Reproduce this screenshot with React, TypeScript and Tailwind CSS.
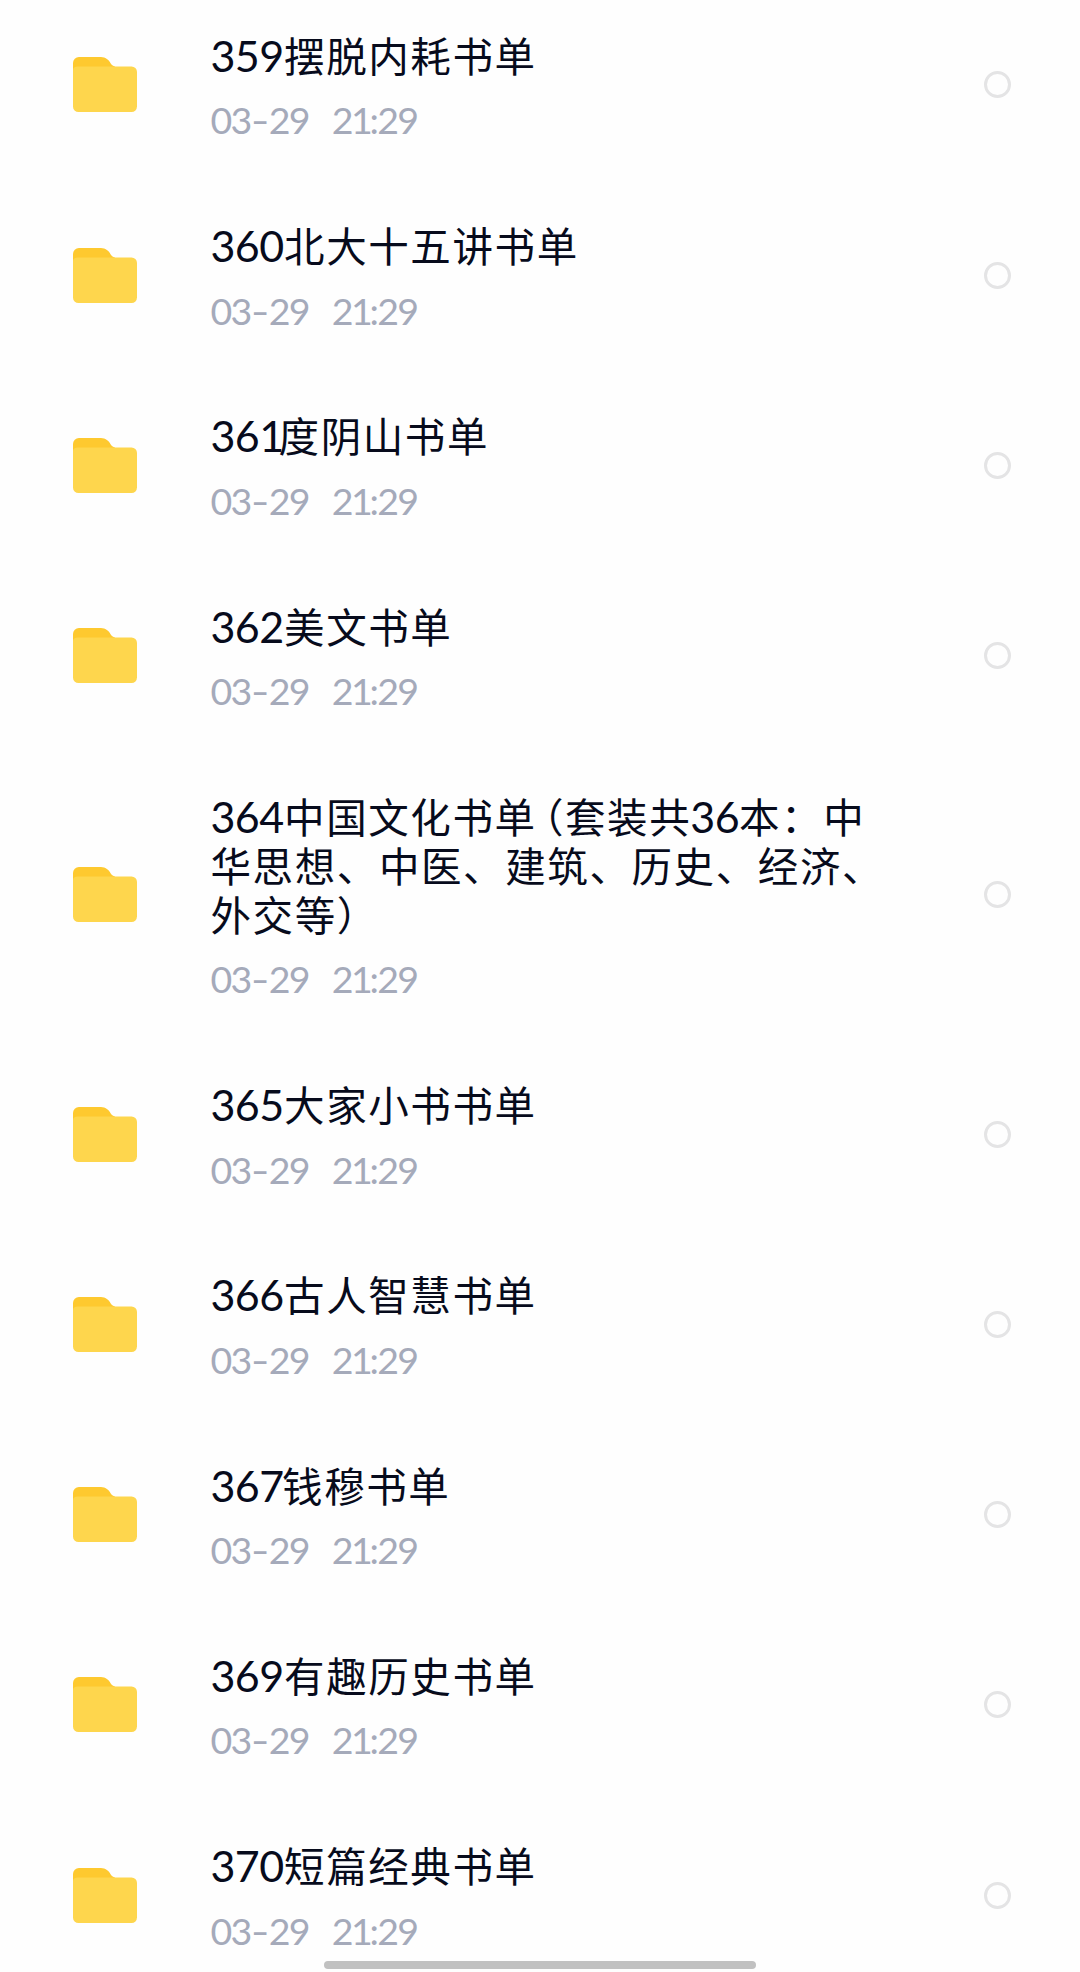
type Folder = {
  no: string;
  lines: string[];
};

const folders: Folder[] = [
  { no: "359", lines: ["359摆脱内耗书单"] },
  { no: "360", lines: ["360北大十五讲书单"] },
  { no: "361", lines: ["361度阴山书单"] },
  { no: "362", lines: ["362美文书单"] },
  {
    no: "364",
    lines: ["364中国文化书单（套装共36本：中", "华思想、中医、建筑、历史、经济、", "外交等）"],
  },
  { no: "365", lines: ["365大家小书书单"] },
  { no: "366", lines: ["366古人智慧书单"] },
  { no: "367", lines: ["367钱穆书单"] },
  { no: "369", lines: ["369有趣历史书单"] },
  { no: "370", lines: ["370短篇经典书单"] },
];

function FolderIcon() {
  return (
    <svg width="64" height="55" viewBox="0 0 64 55" className="shrink-0">
      <path d="M0 6a6 6 0 0 1 6-6h20c5.500 0 8 1.200 10.500 4.500C38 7 39 9 42 9.500L40 13H0z" fill="#fec92f" />
      <path d="M0 13q0-3.500 5-3.500h53.500a5.500 5.500 0 0 1 5.500 5.500v34.500a5.500 5.500 0 0 1-5.500 5.500h-53a5.500 5.500 0 0 1-5.500-5.500z" fill="#fed64d" />
    </svg>
  );
}

// digits are set in a rounder face than the hanzi around them
function TitleLine({ text }: { text: string }) {
  return (
    <span className="block h-[49px] whitespace-nowrap">
      {text.split(/(\d+|（)/).map((part, i) => {
        if (/^\d/.test(part)) {
          return (
            <span
              key={i}
              className={`font-[Lato] text-[43px] tracking-[-0.600px] ${part.endsWith("1") ? "-mr-[5px]" : part.endsWith("7") ? "-mr-[1.500px]" : part === "36" ? "-ml-[1px]" : "mr-[0.500px]"}`}
            >
              {part}
            </span>
          );
        }
        if (part === "（") {
          return (
            <span key={i} className="ml-[6.500px] [font-feature-settings:'halt']">
              {part}
            </span>
          );
        }
        return <span key={i}>{part}</span>;
      })}
    </span>
  );
}

function FolderRow({ folder }: { folder: Folder }) {
  return (
    <li className="flex items-center pt-[43.125px] pb-[43.125px] pl-[73px] pr-[69px]">
      <FolderIcon />
      <div className="relative -top-[3px] ml-[73.500px] flex-1">
        <h2 className="font-['Noto_Sans_CJK_SC',sans-serif] text-[40.500px] leading-[49px] tracking-[1.600px] text-[#070b1c]">
          {folder.lines.map((line) => (
            <TitleLine key={line} text={line} />
          ))}
        </h2>
        <p className="mt-[26.500px] -mb-[1.500px] flex h-[30px] gap-[23px] font-[Lato,sans-serif] text-[37.500px] leading-[30px] tracking-[-1.700px] text-[#a5aaba]">
          <span>
            03<span className="mr-[3.700px] ml-[2.200px] inline-block scale-x-135">-</span>29
          </span>
          <span>
            2<span className="-ml-[1px] -mr-[1.500px]">1</span>:29
          </span>
        </p>
      </div>
      <span className="h-[27px] w-[27px] shrink-0 rounded-full border-[3px] border-[#e4e4e5]" />
    </li>
  );
}

export default function App() {
  return (
    <div className="relative h-[1972px] w-[1080px] overflow-hidden bg-[#fefefe]">
      <ul className="-mt-[10.300px]">
        {folders.map((f) => (
          <FolderRow key={f.no} folder={f} />
        ))}
      </ul>
      <div className="absolute bottom-[3px] left-[323.500px] h-2 w-[432px] rounded-full bg-[#c1c1c1]" />
    </div>
  );
}
